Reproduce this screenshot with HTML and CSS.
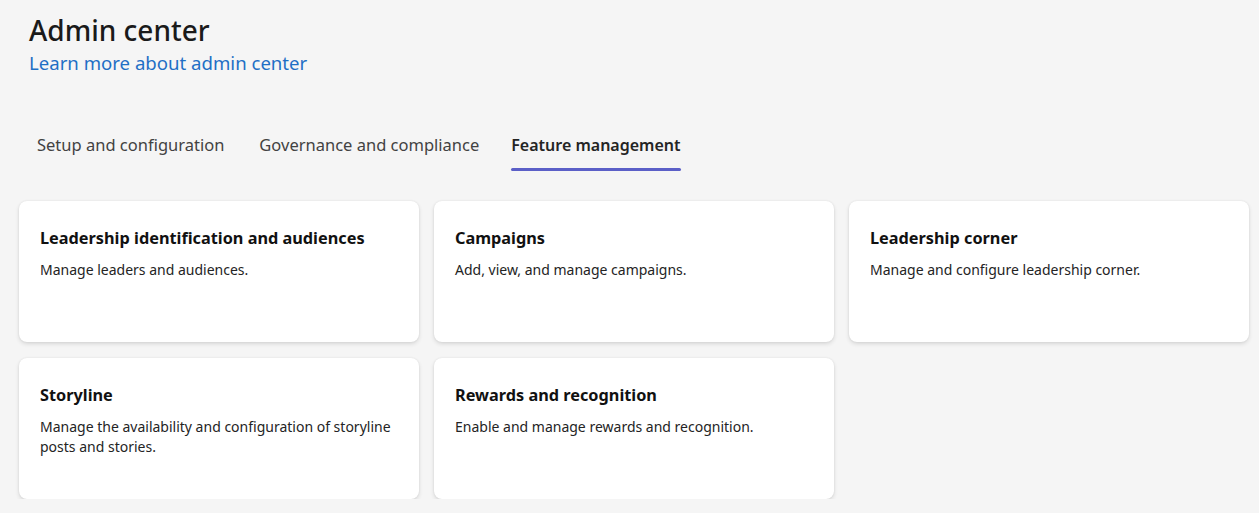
FILE: index.html
```html
<!DOCTYPE html>
<html lang="en">
<head>
<meta charset="utf-8">
<title>Admin center</title>
<link rel="stylesheet" href="styles.css">
</head>
<body>
<div class="page">
  <header class="header">
    <h1 class="title">Admin center</h1>
    <a class="learn" href="#">Learn more about admin center</a>
  </header>
  <nav class="tabs">
    <div class="tab">Setup and configuration</div>
    <div class="tab">Governance and compliance</div>
    <div class="tab active">Feature management</div>
  </nav>
  <main class="grid">
    <div class="card">
      <div class="card-title">Leadership identification and audiences</div>
      <div class="card-desc">Manage leaders and audiences.</div>
    </div>
    <div class="card">
      <div class="card-title">Campaigns</div>
      <div class="card-desc">Add, view, and manage campaigns.</div>
    </div>
    <div class="card">
      <div class="card-title">Leadership corner</div>
      <div class="card-desc">Manage and configure leadership corner.</div>
    </div>
    <div class="card">
      <div class="card-title">Storyline</div>
      <div class="card-desc">Manage the availability and configuration of storyline posts and stories.</div>
    </div>
    <div class="card">
      <div class="card-title">Rewards and recognition</div>
      <div class="card-desc">Enable and manage rewards and recognition.</div>
    </div>
  </main>
</div>
</body>
</html>
```
FILE: styles.css
```css
* { box-sizing: border-box; }
html, body {
  margin: 0;
  padding: 0;
  background: #f5f5f5;
  font-family: "Noto Sans", "Open Sans", sans-serif;
  color: #242424;
}
.page {
  padding: 10px 10px 0 19px;
}
.header {
  padding-left: 10px;
  display: flex;
  flex-direction: column;
}
.title {
  margin: 0;
  font-size: 28px;
  font-weight: 500;
  line-height: 40px;
  color: #1a1a1a;
}
.learn {
  font-size: 18.6px;
  line-height: 26px;
  color: #1f6fc5;
  text-decoration: none;
}
.tabs {
  display: flex;
  gap: 35px;
  margin-top: 49px;
  padding-left: 18px;
}
.tab {
  padding: 8px 0 14px;
  font-size: 16.5px;
  line-height: 24px;
  color: #424242;
  position: relative;
}
.tab.active {
  font-size: 16px;
  font-weight: 600;
  color: #242424;
  margin-left: -3px;
}
.tab.active::after {
  content: "";
  position: absolute;
  left: 0;
  right: 0;
  bottom: 0;
  height: 3px;
  border-radius: 2px;
  background: #5b5fc7;
}
.grid {
  display: grid;
  grid-template-columns: repeat(3, 400px);
  column-gap: 15px;
  row-gap: 16px;
  margin-top: 30px;
}
.card {
  background: #fff;
  border-radius: 8px;
  height: 141px;
  padding: 26px 21px;
  box-shadow: 0 2px 4px rgba(0,0,0,0.12), 0 0 2px rgba(0,0,0,0.08);
}
.card-title {
  font-size: 16.3px;
  font-weight: 700;
  line-height: 22px;
  color: #111;
}
.card-desc {
  margin-top: 11px;
  font-size: 14px;
  line-height: 20px;
  color: #242424;
}
```
